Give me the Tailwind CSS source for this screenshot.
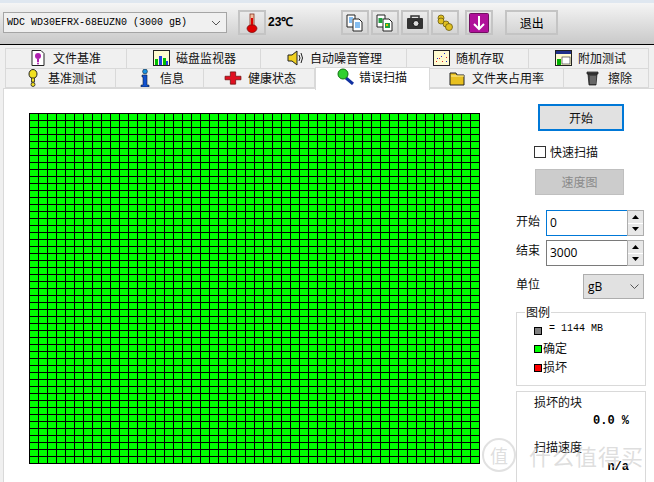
<!DOCTYPE html>
<html lang="en">
<head>
    <meta charset="UTF-8" />
    <title>HD Tune</title>
    <script src="https://cdn.jsdelivr.net/npm/@tailwindcss/browser@4"></script>
</head>
<body class="relative w-[654px] h-[482px] overflow-hidden bg-[#f0f0f0] text-[12px] leading-[16px] text-black font-['Noto_Sans_CJK_SC','Noto_Sans',sans-serif]">

<!-- toolbar -->
<div class="h-[45px] border-b border-black border-t-[3px] border-t-[#dfe7f0] bg-gradient-to-b from-[#f5f5f5] to-[#c9c9c9] pt-[7px] pl-[3px] flex items-start">
    <div class="w-[224px] h-[21px] mt-[2px] border border-[#a5a5a5] bg-[#f0f0f0] flex items-center justify-between pl-[3px] pr-[5px] font-['Liberation_Mono',monospace] text-[10px]">
        <span>WDC WD30EFRX-68EUZN0 (3000 gB)</span>
        <svg width="10" height="6" viewBox="0 0 10 6"><path d="M1 1l4 4 4-4" fill="none" stroke="#555"/></svg>
    </div>
    <div class="ml-[11px] w-[28px] h-[25px] border-2 border-[#c4c4c4] flex items-center justify-center">
        <svg width="14" height="20" viewBox="0 0 14 20"><rect x="5" y="1" width="4" height="13" fill="#f5c0a0" stroke="#803020" stroke-width=".8"/><rect x="6" y="5" width="2" height="10" fill="#e00000"/><path d="M2 15a5 4.500 0 0 0 10 0a5 4 0 0 0-3-3H5a5 4 0 0 0-3 3z" fill="#e00000" stroke="#801010" stroke-width=".8"/></svg>
    </div>
    <span class="ml-[2px] mt-[5px] font-['Liberation_Sans',sans-serif] font-bold text-[12px] leading-[14px]">23℃</span>
    <div class="ml-[48px] w-[28px] h-[25px] border-2 border-[#c4c4c4] flex items-center justify-center">
        <svg width="18" height="18" viewBox="0 0 18 18"><path d="M1 1h8v12H1z" fill="#fff" stroke="#222"/><path d="M7 5h6l3 3v9H7z" fill="#fff" stroke="#222"/><path d="M9 9h5M9 11h5M9 13h5" stroke="#0a7ae0"/><path d="M3 4h4M3 6h3M3 8h3" stroke="#0a7ae0"/></svg>
    </div>
    <div class="ml-[2px] w-[28px] h-[25px] border-2 border-[#c4c4c4] flex items-center justify-center">
        <svg width="18" height="18" viewBox="0 0 18 18"><path d="M1 1h8v12H1z" fill="#fff" stroke="#222"/><path d="M7 5h6l3 3v9H7z" fill="#fff" stroke="#222"/><rect x="2.500" y="4" width="4" height="5" fill="#20a040"/><rect x="9" y="9" width="5" height="5" fill="#20a040"/><rect x="10" y="10" width="2" height="2" fill="#e0c000"/></svg>
    </div>
    <div class="ml-[2px] w-[28px] h-[25px] border-2 border-[#c4c4c4] flex items-center justify-center">
        <svg width="18" height="15" viewBox="0 0 18 15"><rect x="1" y="3" width="16" height="11" rx="1" fill="#333"/><rect x="5" y="1" width="8" height="3" fill="none" stroke="#333" stroke-width="1.500"/><circle cx="10" cy="8.500" r="3" fill="#ddd" stroke="#111"/></svg>
    </div>
    <div class="ml-[2px] w-[28px] h-[25px] border-2 border-[#c4c4c4] flex items-center justify-center">
        <svg width="18" height="18" viewBox="0 0 18 18"><g fill="#e0c020" stroke="#6a5a10" stroke-width=".8"><circle cx="5" cy="4" r="3"/><circle cx="5" cy="7" r="3"/><circle cx="10" cy="10" r="3"/><circle cx="13" cy="13" r="3.500"/></g></svg>
    </div>
    <div class="ml-[6px] w-[28px] h-[25px] border-2 border-[#c4c4c4] flex items-center justify-center">
        <svg width="20" height="20" viewBox="0 0 20 20"><rect x="0.500" y="0.500" width="19" height="19" rx="1" fill="#b0109a" stroke="#701060"/><path d="M10 3v13M5 11l5 5 5-5" fill="none" stroke="#fff" stroke-width="2"/></svg>
    </div>
    <div class="ml-[12px] w-[53px] h-[25px] border-2 border-[#c4c4c4] flex items-center justify-center">退出</div>
</div>

<!-- tabs -->
<div class="relative h-[43px] pt-[3px] pl-[5px]">
    <div class="flex h-[20px] text-[#111]">
        <div class="w-[122px] border border-b-0 border-[#d9d9d9] flex items-center pl-[24px] gap-[7px] pb-[2px]">
            <svg width="16" height="16" viewBox="0 0 16 16"><path d="M2 .5h9l3 3v12H2z" fill="#fff" stroke="#222"/><circle cx="8" cy="6" r="3" fill="#b020b0"/><rect x="7" y="9" width="2" height="3" fill="#b020b0"/><circle cx="8" cy="13.500" r="1" fill="#b020b0"/></svg>
            <span>文件基准</span>
        </div>
        <div class="w-[134px] border border-l-0 border-b-0 border-[#d9d9d9] flex items-center pl-[26px] gap-[6px] pb-[2px]">
            <svg width="17" height="16" viewBox="0 0 17 16"><rect x=".5" y=".5" width="16" height="15" fill="#fffbd0" stroke="#222"/><rect x="2" y="9" width="3" height="6" fill="#00c000"/><rect x="6" y="6" width="3" height="9" fill="#2040e0"/><rect x="10" y="8" width="3" height="7" fill="#00c000"/><rect x="13" y="11" width="2" height="4" fill="#2040e0"/></svg>
            <span>磁盘监视器</span>
        </div>
        <div class="w-[146px] border border-l-0 border-b-0 border-[#d9d9d9] flex items-center pl-[26px] gap-[6px] pb-[2px]">
            <svg width="17" height="16" viewBox="0 0 17 16"><path d="M1 5h4l5-4v14l-5-4H1z" fill="#f0d020" stroke="#222"/><path d="M12 5q2 3 0 6M14 3q3 5 0 10" fill="none" stroke="#222"/></svg>
            <span>自动噪音管理</span>
        </div>
        <div class="w-[122px] border border-l-0 border-b-0 border-[#d9d9d9] flex items-center pl-[26px] gap-[6px] pb-[2px]">
            <svg width="17" height="16" viewBox="0 0 17 16"><rect x=".5" y=".5" width="16" height="15" fill="#fffbd0" stroke="#222"/><g fill="#e02020"><rect x="3" y="11" width="1" height="1"/><rect x="6" y="8" width="1" height="1"/><rect x="9" y="11" width="1" height="1"/><rect x="13" y="7" width="1" height="1"/></g><g fill="#2030d0"><rect x="4" y="8" width="1" height="1"/><rect x="8" y="6" width="1" height="1"/><rect x="11" y="3" width="1" height="1"/><rect x="13" y="11" width="1" height="1"/></g></svg>
            <span>随机存取</span>
        </div>
        <div class="w-[120px] border border-l-0 border-b-0 border-[#d9d9d9] flex items-center pl-[26px] gap-[6px] pb-[2px]">
            <svg width="17" height="16" viewBox="0 0 17 16"><rect x=".5" y=".5" width="16" height="15" fill="#fffbd0" stroke="#222"/><rect x="1" y="1" width="15" height="3" fill="#20308a"/><rect x="2" y="9" width="4" height="6" fill="#00b000"/><rect x="7" y="7" width="8" height="7" fill="#fff" stroke="#222" stroke-width=".6"/></svg>
            <span>附加测试</span>
        </div>
    </div>
    <div class="flex h-[20px] text-[#111]">
        <div class="w-[111px] border border-[#d9d9d9] flex items-center pl-[22px] gap-[10px]">
            <svg width="10" height="18" viewBox="0 0 9 18"><ellipse cx="4.500" cy="5" rx="4" ry="4.500" fill="#f0e020" stroke="#222"/><rect x="3" y="9" width="3" height="4" fill="#f0e020" stroke="#222" stroke-width=".8"/><circle cx="4.500" cy="15.500" r="2" fill="#f0e020" stroke="#222" stroke-width=".8"/></svg>
            <span>基准测试</span>
        </div>
        <div class="w-[88px] border border-l-0 border-[#d9d9d9] flex items-center pl-[24px] gap-[10px]">
            <svg width="10" height="18" viewBox="0 0 8 18"><circle cx="4" cy="2.500" r="2.400" fill="#1890e0" stroke="#123"  stroke-width=".6"/><path d="M1 6h5v10h2v2H0v-2h2V8H1z" fill="#1050d0" stroke="#123" stroke-width=".6"/></svg>
            <span>信息</span>
        </div>
        <div class="w-[111px] border border-l-0 border-[#d9d9d9] flex items-center pl-[20px] gap-[6px]">
            <svg width="18" height="14" viewBox="0 0 17 16" preserveAspectRatio="none"><path d="M6 1h5v5h5v4h-5v5H6v-5H1V6h5z" fill="#e01020" stroke="#701010" stroke-width=".8"/></svg>
            <span>健康状态</span>
        </div>
        <!-- spacer under the active tab, which sits above the row -->
        <div class="w-[115px]"></div>
        <div class="w-[134px] border border-l-0 border-[#d9d9d9] flex items-center pl-[19px] gap-[7px]">
            <svg width="16" height="16" viewBox="0 0 16 16"><path d="M1 3h6l1 2h7v10H1z" fill="#e8c020" stroke="#222"/><path d="M2 6h13" stroke="#fff0a0"/></svg>
            <span>文件夹占用率</span>
        </div>
        <div class="w-[85px] border border-l-0 border-[#d9d9d9] flex items-center pl-[21px] gap-[8px]">
            <svg width="15" height="16" viewBox="0 0 15 16"><path d="M2 2h11v2H2z" fill="#555" stroke="#111" stroke-width=".7"/><path d="M3 4h9l-1 11H4z" fill="#444" stroke="#111" stroke-width=".7"/><path d="M6 6v8M8 6v8M10 6v8" stroke="#aaa" stroke-width=".7"/></svg>
            <span>擦除</span>
        </div>
    </div>
    <div class="absolute left-[315px] top-[22px] z-10 w-[115px] h-[23px] bg-white border border-b-0 border-[#d9d9d9] flex items-center pl-[21px] gap-[4px] pb-[5px] text-[#111]">
        <svg width="18" height="17" viewBox="0 0 18 17"><path d="M9 10l7 6" stroke="#1030a0" stroke-width="3"/><circle cx="6" cy="6" r="5" fill="#30d030" stroke="#107010"/></svg>
        <span>错误扫描</span>
    </div>
</div>

<!-- scan page -->
<div class="h-[394px] ml-[3px] bg-white border-l border-t border-[#d9d9d9] flex items-start pt-[24px] pl-[25px]">
    <div class="w-[451px] h-[351px] bg-[#00ff00] bg-[repeating-linear-gradient(to_right,#000_0,#000_1px,transparent_1px,transparent_9px),repeating-linear-gradient(to_bottom,#000_0,#000_1px,transparent_1px,transparent_7px)] border-r border-b border-black"></div>

    <div class="w-[130px] ml-[36px] shrink-0 flex flex-col -mt-[9px]">
        <div class="ml-[22px] w-[86px] h-[27px] border-2 border-[#0078d7] bg-[#e1e1e1] flex items-center justify-center text-[#111]">开始</div>
        <label class="ml-[18px] mt-[14px] flex items-center gap-[4px] h-[13px]">
            <span class="w-[12px] h-[12px] border border-[#333] bg-white"></span>
            <span class="text-[#111]">快速扫描</span>
        </label>
        <div class="ml-[19px] mt-[11px] w-[89px] h-[26px] border border-[#bfbfbf] bg-[#cccccc] flex items-center justify-center text-[#8a8a8a]">速度图</div>

        <div class="mt-[15px] flex items-center h-[26px]">
            <span class="w-[30px] text-[#111] -mt-[5px]">开始</span>
            <div class="w-[81px] h-[26px] border border-[#0078d7] border-r-0 bg-white pl-[3px] flex items-center font-['Open_Sans',sans-serif] text-[12px]">0</div>
            <div class="w-[17px] h-[26px] border border-[#adadad] flex flex-col">
                <div class="flex-1 bg-[#e8e8e8] border-b border-white flex items-center justify-center"><svg width="7" height="4" viewBox="0 0 7 4"><path d="M3.500 0L7 4H0z"/></svg></div>
                <div class="flex-1 bg-[#e8e8e8] flex items-center justify-center"><svg width="7" height="4" viewBox="0 0 7 4"><path d="M0 0h7L3.500 4z"/></svg></div>
            </div>
        </div>
        <div class="mt-[4px] flex items-center h-[26px]">
            <span class="w-[30px] text-[#111] -mt-[7px]">结束</span>
            <div class="w-[81px] h-[26px] border border-[#7a7a7a] border-r-0 bg-white pl-[3px] flex items-center font-['Open_Sans',sans-serif] text-[12px]">3000</div>
            <div class="w-[17px] h-[26px] border border-[#adadad] flex flex-col">
                <div class="flex-1 bg-[#e8e8e8] border-b border-white flex items-center justify-center"><svg width="7" height="4" viewBox="0 0 7 4"><path d="M3.500 0L7 4H0z"/></svg></div>
                <div class="flex-1 bg-[#e8e8e8] flex items-center justify-center"><svg width="7" height="4" viewBox="0 0 7 4"><path d="M0 0h7L3.500 4z"/></svg></div>
            </div>
        </div>
        <div class="mt-[8px] flex items-center h-[25px]">
            <span class="w-[67px] text-[#111] -mt-[6px]">单位</span>
            <div class="w-[61px] h-[25px] border border-[#adadad] bg-[#e1e1e1] flex items-center justify-between pl-[4px] pr-[4px] font-['Open_Sans',sans-serif] text-[12px]">
                <span>gB</span>
                <svg width="9" height="5" viewBox="0 0 9 5"><path d="M.5.500l4 4 4-4" fill="none" stroke="#555"/></svg>
            </div>
        </div>

        <div class="relative mt-[13px] w-[130px] h-[74px] border border-[#d9d9d9] pl-[17px] pt-[9px]">
            <span class="absolute left-[8px] -top-[7px] bg-white px-[1px] leading-[12px] text-[#111]">图例</span>
            <div class="flex items-center h-[15px] font-['Liberation_Mono',monospace] text-[10px]">
                <span class="w-[8px] h-[8px] border border-black bg-[#808080] mt-[2px]"></span>
                <span class="ml-[7px] -mt-[2px]">= 1144 MB</span>
            </div>
            <div class="flex items-center h-[19px] mt-[1px]">
                <span class="w-[8px] h-[8px] border border-black bg-[#00ff00] mt-[3px]"></span>
                <span class="text-[#111] ml-[1px]">确定</span>
            </div>
            <div class="flex items-center h-[19px]">
                <span class="w-[8px] h-[8px] border border-black bg-[#ff0000] mt-[3px]"></span>
                <span class="text-[#111] ml-[1px]">损坏</span>
            </div>
        </div>

        <div class="mt-[5px] w-[130px] h-[100px] border border-[#d9d9d9] pl-[17px] pt-[2px]">
            <div class="text-[#111]">损坏的块</div>
            <div class="mt-[4px] pr-[16px] text-right font-['Liberation_Mono',monospace] text-[12px] font-bold leading-[14px]">0.0 %</div>
            <div class="mt-[11px] text-[#111]">扫描速度</div>
            <div class="mt-[6px] pr-[16px] text-right font-['Liberation_Mono',monospace] text-[12px] font-bold leading-[12px]">n/a</div>
        </div>
    </div>
</div>

<!-- site watermark over the window -->
<div class="absolute left-[482px] top-[438px] flex items-center gap-[13px] text-[#c8c8c8]/60">
    <span class="w-[34px] h-[34px] rounded-full border-2 border-[#d4d4d4]/70 flex items-center justify-center text-[18px]">值</span>
    <span class="text-[22px] leading-[28px] tracking-[1px]">什么值得买</span>
</div>

</body>
</html>
